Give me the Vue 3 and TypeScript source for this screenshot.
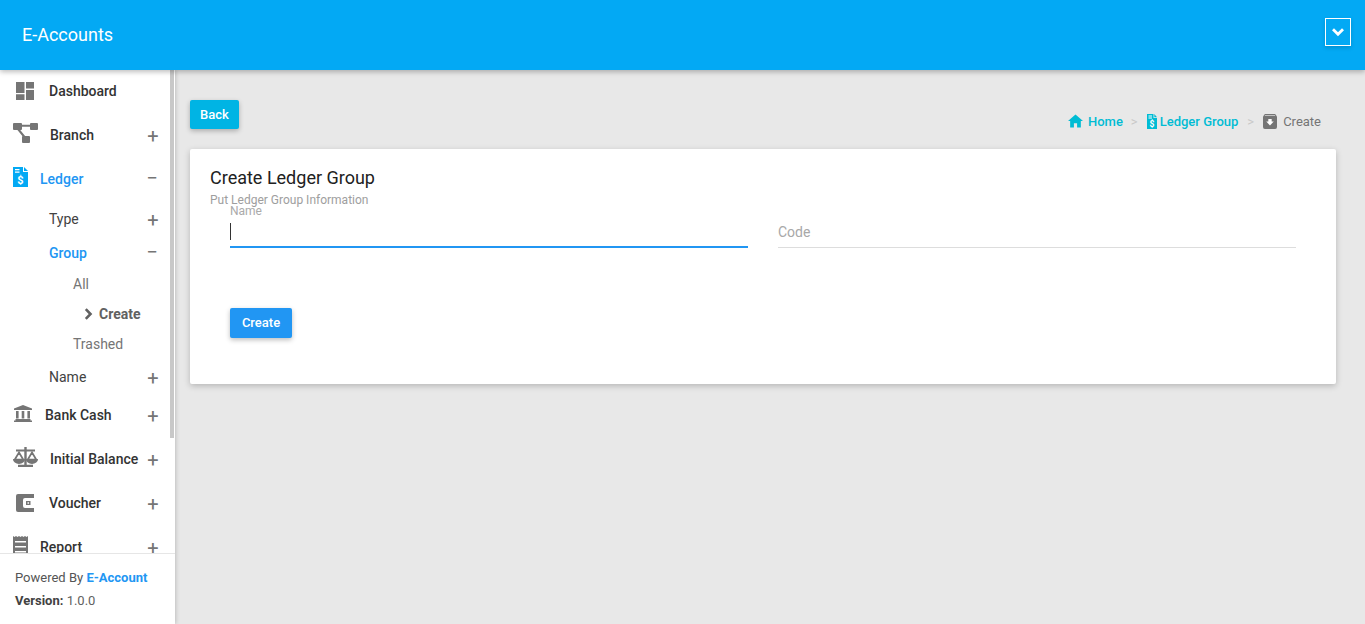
<script setup lang="ts">
const crumbBlue = '#00bcd4'
</script>

<template>
  <div class="page">
    <header class="topbar">
      <span class="brand">E-Accounts</span>
      <button class="menu-toggle" aria-label="Menu">
        <svg width="14" height="10" viewBox="0 0 14 10"><path d="M2 2.200l5 5 5-5" fill="none" stroke="#fff" stroke-width="2.800" /></svg>
      </button>
    </header>
    <div class="body">
      <aside class="sidebar">
        <div class="scroll">
          <nav class="nav">
            <a class="row top">
              <svg class="ic ic-dash" viewBox="0 0 18 18" width="18" height="18"><path d="M0 0h8.500v11H0zM10 0h8v6.500h-8zM10 8h8v10h-8zM0 12.200h8.500V18H0z" fill="#757575" /></svg>
              <span class="lbl l-dash">Dashboard</span>
            </a>
            <a class="row top">
              <svg class="ic ic-branch" viewBox="0 0 25 20" width="25" height="20"><rect x="0" y="0" width="9" height="7" rx="1" fill="#757575" /><rect x="17" y="0" width="8" height="7" rx="1" fill="#757575" /><rect x="9" y="13" width="8" height="7" rx="1" fill="#757575" /><path d="M8 2.800h10M5 6l6.500 8" stroke="#757575" stroke-width="2" fill="none" /></svg>
              <span class="lbl l-branch">Branch</span>
              <span class="pm">+</span>
            </a>
            <a class="row top active">
              <svg class="ic ic-ledger" viewBox="0 0 15 20" width="15" height="20"><path d="M0 0h10v5h5v15H0z" fill="#03a9f4" /><path d="M11 0l4 4h-4z" fill="#03a9f4" /><path d="M2 2h4.500v1.200H2zM2 4.500h4.500v1.200H2z" fill="#fff" /><text x="7.500" y="16.500" font-size="11" font-weight="700" font-family="Roboto, sans-serif" text-anchor="middle" fill="#fff">$</text></svg>
              <span class="lbl l-ledger">Ledger</span>
              <span class="pm minus">−</span>
            </a>
            <div class="sub">
              <a class="row level2"><span>Type</span><span class="pm">+</span></a>
              <a class="row level2 active"><span>Group</span><span class="pm minus">−</span></a>
              <div class="subsub">
                <a class="row level3">All</a>
                <a class="row level3 current">
                  <svg width="9" height="12" viewBox="0 0 9 12"><path d="M1.800 1.200L6.500 6l-4.700 4.800" fill="none" stroke="#616161" stroke-width="2.600" /></svg>
                  <span>Create</span>
                </a>
                <a class="row level3">Trashed</a>
              </div>
              <a class="row level2"><span>Name</span><span class="pm">+</span></a>
            </div>
            <a class="row top">
              <svg class="ic ic-bank" viewBox="0 0 18 17" width="18" height="17"><path d="M9 0l9 3.500V5H0V3.500z" fill="#757575" /><path d="M2 6h2.600v7.500H2zM7.700 6h2.600v7.500H7.700zM13.400 6H16v7.500h-2.600zM1.500 14h15v1.500h-15zM0 15.500h18V17H0z" fill="#757575" /></svg>
              <span class="lbl l-bank">Bank Cash</span>
              <span class="pm">+</span>
            </a>
            <a class="row top">
              <svg class="ic ic-scale" viewBox="0 0 25 20" width="25" height="20"><path d="M11.300 0h2.400v18h-2.400zM5 17.700h15V20H5zM3 2.500h19v2H3z" fill="#757575" /><path d="M6 5.500L1.800 12.500h8.400zM19 5.500l-4.200 7h8.400z" fill="none" stroke="#757575" stroke-width="1.700" /><path d="M0 12h12a6 5 0 0 1-12 0zM13 12h12a6 5 0 0 1-12 0z" fill="#757575" /></svg>
              <span class="lbl l-init">Initial Balance</span>
              <span class="pm">+</span>
            </a>
            <a class="row top">
              <svg class="ic ic-wallet" viewBox="0 0 18 18" width="18" height="18"><path d="M2 0h16v18H2a2 2 0 0 1-2-2V2a2 2 0 0 1 2-2z" fill="#757575" /><path d="M18 4H9a2 2 0 0 0-2 2v6a2 2 0 0 0 2 2h9z" fill="#fff" /><path d="M10 7h4.500v4H10z" fill="#757575" /><path d="M11.500 8.300h1.500v1.400h-1.500z" fill="#fff" /></svg>
              <span class="lbl l-voucher">Voucher</span>
              <span class="pm">+</span>
            </a>
            <a class="row top">
              <svg class="ic ic-report" viewBox="0 0 15 20" width="15" height="20"><path d="M0 0l1.500 1L3 0l1.500 1L6 0l1.500 1L9 0l1.500 1L12 0l1.500 1L15 0v20H0z" fill="#757575" /><path d="M2 5h11v1.500H2zM2 10h11v1.500H2zM2 15h11v1.500H2z" fill="#fff" /></svg>
              <span class="lbl l-report">Report</span>
              <span class="pm">+</span>
            </a>
          </nav>
          <div class="scrollbar"><div class="thumb"></div></div>
        </div>
        <footer class="side-foot">
          <div>Powered By <b class="link">E-Account</b></div>
          <div class="ver"><b>Version:</b> 1.0.0</div>
        </footer>
      </aside>
      <main class="main">
        <div class="toolbar">
          <button class="btn back">Back</button>
          <div class="crumbs" :style="{ color: crumbBlue }">
            <svg width="15" height="14" viewBox="0 0 16 14"><path d="M8 0L0 7h2.300v7h4v-4.500h3.400V14h4V7H16z" fill="#00bcd4" /></svg>
            <a class="cr-link">Home</a>
            <span class="sep">&gt;</span>
            <svg width="10" height="15" viewBox="0 0 10 15"><path d="M0 0h6.500v4H10v11H0z" fill="#00bcd4" /><path d="M7.300 0L10 3.200H7.300z" fill="#00bcd4" /><path d="M1.500 1.500h3.500v1H1.500zM1.500 3.500h3.500v1H1.500z" fill="#fff" /><text x="5" y="12.500" font-size="8.500" font-weight="700" font-family="Roboto, sans-serif" text-anchor="middle" fill="#fff">$</text></svg>
            <a class="cr-link lg">Ledger Group</a>
            <span class="sep sep2">&gt;</span>
            <svg width="14" height="15" viewBox="0 0 15 15" preserveAspectRatio="none"><path d="M2 0h11l2 2.500V13a2 2 0 0 1-2 2H2a2 2 0 0 1-2-2V2.500z" fill="#757575" /><path d="M2 1.500h11" stroke="#d8d8d8" stroke-width=".8" /><path d="M5.700 5h3.600v2.500h2.200L7.500 11.500 3.500 7.500h2.200z" fill="#fff" /></svg>
            <span class="cr-cur">Create</span>
          </div>
        </div>
        <section class="card">
          <h2 class="title">Create Ledger Group</h2>
          <p class="subtitle">Put Ledger Group Information</p>
          <form class="form" @submit.prevent>
            <div class="fields">
              <label class="field focused">
                <span class="float">Name</span>
                <span class="input"><i class="caret"></i></span>
              </label>
              <label class="field">
                <span class="input placeholder">Code</span>
              </label>
            </div>
            <button class="btn create">Create</button>
          </form>
        </section>
      </main>
    </div>
  </div>
</template>

<style>
html, body { margin: 0; background: #e8e8e8; }
</style>

<style scoped>
.page { height: 624px; width: 1365px; overflow: hidden; background: #e8e8e8; font-family: Roboto, "Liberation Sans", sans-serif; display: flex; flex-direction: column; }
.topbar { height: 70px; flex: none; background: #03a9f4; color: #fff; display: flex; align-items: center; justify-content: space-between; padding: 0 14px 0 22px; box-sizing: border-box; box-shadow: 0 2px 5px rgba(0,0,0,.26); position: relative; z-index: 2; }
.brand { font-size: 18px; font-weight: 400; margin-top: -1px; }
.menu-toggle { width: 26px; height: 28px; padding: 0; border: 1.500px solid #fff; background: transparent; display: flex; align-items: center; justify-content: center; margin-top: -6px; box-shadow: 0 2px 4px rgba(0,0,0,.15); }
.body { flex: 1; display: flex; min-height: 0; }
.sidebar { width: 175px; flex: none; background: #fff; display: flex; flex-direction: column; box-shadow: 1px 0 4px rgba(0,0,0,.18); position: relative; z-index: 1; }
.scroll { height: 484px; overflow: hidden; position: relative; border-bottom: 1px solid #e6e6e6; box-sizing: border-box; }
.nav { margin-top: -1px; width: 170px; }
.row { display: flex; align-items: center; color: #424242; font-size: 14px; box-sizing: border-box; position: relative; }
.top { height: 44px; font-weight: 500; color: #333; }
.top.active { color: #2196f3; }
.pm { position: absolute; left: 146px; top: 50%; margin-top: -9px; width: 14px; text-align: center; color: #757575; font-size: 20px; font-weight: 400; line-height: 20px; }
.pm.minus { left: 145px; margin-top: -11px; }
.ic { position: absolute; }
.ic-dash { left: 16px; top: 13px; }
.ic-branch { left: 13px; top: 10px; }
.ic-ledger { left: 13px; top: 10px; }
.ic-bank { left: 14px; top: 12px; }
.ic-scale { left: 13px; top: 10px; }
.ic-wallet { left: 16px; top: 13px; }
.ic-report { left: 13px; top: 11px; }
.lbl { display: block; }
.l-dash { margin-left: 49px; }
.l-branch { margin-left: 50px; }
.l-ledger { margin-left: 40px; }
.l-bank { margin-left: 45px; }
.l-init { margin-left: 50px; }
.l-voucher { margin-left: 49px; }
.l-report { margin-left: 40px; }
.sub { margin: 1px 0 -1px; }
.level2 { height: 34px; padding-left: 49px; }
.level2.active { color: #2196f3; font-weight: 500; }
.subsub { margin: -1px 0 1px; }
.level3 { height: 30px; padding-left: 73px; color: #757575; }
.level3.current { padding-left: 84px; font-weight: 700; color: #616161; gap: 6px; }
.scrollbar { position: absolute; left: 170px; top: 0; bottom: 0; width: 4px; background: #fff; }
.thumb { height: 368px; background: #c8c8c8; }
.side-foot { flex: 1; padding: 16px 0 0 15px; font-size: 13px; color: #555; line-height: 16px; background: #fff; }
.side-foot b { font-weight: 500; color: #424242; }
.side-foot .link { color: #2196f3; font-weight: 700; }
.side-foot .ver { margin-top: 7px; color: #616161; }
.side-foot .ver b { font-weight: 700; }
.main { flex: 1; min-width: 0; padding: 30px 29px 0 15px; }
.toolbar { display: flex; justify-content: space-between; align-items: flex-start; height: 49px; }
.btn { border: 0; border-radius: 2px; color: #fff; font-family: inherit; font-size: 13px; font-weight: 500; padding: 0; box-shadow: 0 2px 5px rgba(0,0,0,.26); }
.back { width: 49px; height: 29px; background: #00b4e4; }
.crumbs { display: flex; align-items: center; height: 16px; margin-top: 13px; padding-right: 15px; font-size: 13px; }
.cr-link { font-weight: 500; color: #00bcd4; margin-left: 5px; }
.cr-link.lg { margin-left: 3px; }
.sep { color: #c8c8c8; margin: 0 9px 0 8px; }
.sep2 { margin: 0 9px 0 9px; }
.cr-cur { color: #757575; margin-left: 6px; }
.card { background: #fff; height: 235px; border-radius: 2px; box-shadow: 0 2px 6px rgba(0,0,0,.22); padding: 18px 20px 0; box-sizing: border-box; }
.title { margin: 0; font-size: 18px; font-weight: 400; line-height: 22px; color: #212121; }
.subtitle { margin: 3px 0 0; font-size: 12px; line-height: 16px; color: #9e9e9e; }
.form { padding: 0 20px; }
.fields { display: flex; gap: 30px; margin-top: -1px; }
.field { flex: 1; height: 41px; display: block; position: relative; border-bottom: 1px solid #ddd; box-sizing: border-box; }
.field.focused { border-bottom: 2px solid #2196f3; }
.float { position: absolute; left: 0; top: -3px; font-size: 12px; line-height: 14px; color: #aaa; }
.input { position: absolute; left: 0; top: 16px; height: 17px; font-size: 14px; line-height: 17px; display: block; }
.placeholder { top: 17px; color: #a8a8a8; }
.caret { display: block; width: 1px; height: 17px; background: #333; }
.create { display: block; margin-top: 60px; width: 62px; height: 30px; padding-bottom: 2px; background: #2196f3; }
</style>
